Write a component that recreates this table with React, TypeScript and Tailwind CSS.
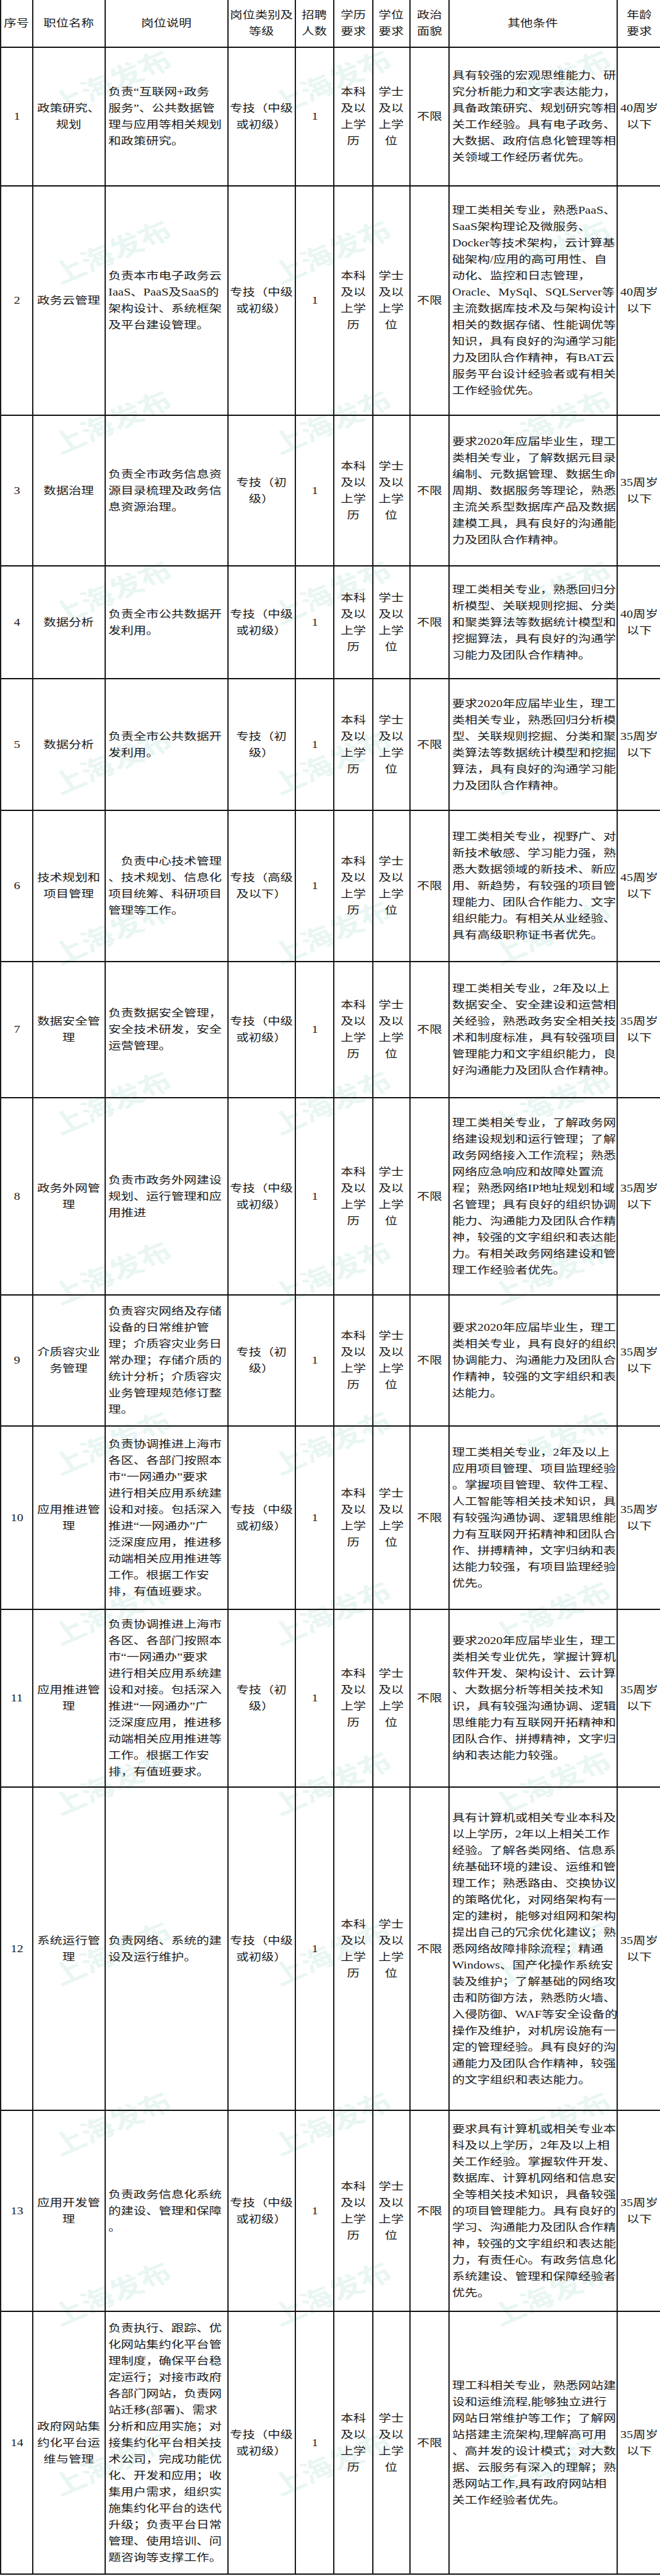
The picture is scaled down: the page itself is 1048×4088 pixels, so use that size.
import clsx from 'clsx';

type Row = {
  no: string;
  height: string;
  title: string[];
  desc: string[];
  level: string[];
  other: string[];
  age: string;
};

const GRID = 'grid grid-cols-[51px_115px_195px_107px_61px_62px_59px_62px_267px_69px]';

const EDU = ['本科', '及以', '上学', '历'];
const DEGREE = ['学士', '及以', '上学', '位'];
const MID = ['专技（中级', '或初级）'];
const JUNIOR = ['专技（初', '级）'];

const PUSH_DESC = [
  '负责协调推进上海市',
  '各区、各部门按照本',
  '市“一网通办”要求',
  '进行相关应用系统建',
  '设和对接。包括深入',
  '推进“一网通办”广',
  '泛深度应用，推进移',
  '动端相关应用推进等',
  '工作。根据工作安',
  '排，有值班要求。',
];

const rows: Row[] = [
  {
    no: '1',
    height: 'h-[220px]',
    title: ['政策研究、', '规划'],
    desc: ['负责“互联网+政务', '服务”、公共数据管', '理与应用等相关规划', '和政策研究。'],
    level: MID,
    other: [
      '具有较强的宏观思维能力、研',
      '究分析能力和文字表达能力，',
      '具备政策研究、规划研究等相',
      '关工作经验。具有电子政务、',
      '大数据、政府信息化管理等相',
      '关领域工作经历者优先。',
    ],
    age: '40',
  },
  {
    no: '2',
    height: 'h-[364px]',
    title: ['政务云管理'],
    desc: ['负责本市电子政务云', 'IaaS、PaaS及SaaS的', '架构设计、系统框架', '及平台建设管理。'],
    level: MID,
    other: [
      '理工类相关专业，熟悉PaaS、',
      'SaaS架构理论及微服务、',
      'Docker等技术架构，云计算基',
      '础架构/应用的高可用性、自',
      '动化、监控和日志管理，',
      'Oracle、MySql、SQLServer等',
      '主流数据库技术及与架构设计',
      '相关的数据存储、性能调优等',
      '知识，具有良好的沟通学习能',
      '力及团队合作精神，有BAT云',
      '服务平台设计经验者或有相关',
      '工作经验优先。',
    ],
    age: '40',
  },
  {
    no: '3',
    height: 'h-[239px]',
    title: ['数据治理'],
    desc: ['负责全市政务信息资', '源目录梳理及政务信', '息资源治理。'],
    level: JUNIOR,
    other: [
      '要求2020年应届毕业生，理工',
      '类相关专业，了解数据元目录',
      '编制、元数据管理、数据生命',
      '周期、数据服务等理论，熟悉',
      '主流关系型数据库产品及数据',
      '建模工具，具有良好的沟通能',
      '力及团队合作精神。',
    ],
    age: '35',
  },
  {
    no: '4',
    height: 'h-[179px]',
    title: ['数据分析'],
    desc: ['负责全市公共数据开', '发利用。'],
    level: MID,
    other: [
      '理工类相关专业，熟悉回归分',
      '析模型、关联规则挖掘、分类',
      '和聚类算法等数据统计模型和',
      '挖掘算法，具有良好的沟通学',
      '习能力及团队合作精神。',
    ],
    age: '40',
  },
  {
    no: '5',
    height: 'h-[209px]',
    title: ['数据分析'],
    desc: ['负责全市公共数据开', '发利用。'],
    level: JUNIOR,
    other: [
      '要求2020年应届毕业生，理工',
      '类相关专业，熟悉回归分析模',
      '型、关联规则挖掘、分类和聚',
      '类算法等数据统计模型和挖掘',
      '算法，具有良好的沟通学习能',
      '力及团队合作精神。',
    ],
    age: '35',
  },
  {
    no: '6',
    height: 'h-[240px]',
    title: ['技术规划和', '项目管理'],
    desc: ['　负责中心技术管理', '、技术规划、信息化', '项目统筹、科研项目', '管理等工作。'],
    level: ['专技（高级', '及以下）'],
    other: [
      '理工类相关专业，视野广、对',
      '新技术敏感、学习能力强，熟',
      '悉大数据领域的新技术、新应',
      '用、新趋势，有较强的项目管',
      '理能力、团队合作能力、文字',
      '组织能力。有相关从业经验、',
      '具有高级职称证书者优先。',
    ],
    age: '45',
  },
  {
    no: '7',
    height: 'h-[216px]',
    title: ['数据安全管', '理'],
    desc: ['负责数据安全管理，', '安全技术研发，安全', '运营管理。'],
    level: MID,
    other: [
      '理工类相关专业，2年及以上',
      '数据安全、安全建设和运营相',
      '关经验，熟悉政务安全相关技',
      '术和制度标准，具有较强项目',
      '管理能力和文字组织能力，良',
      '好沟通能力及团队合作精神。',
    ],
    age: '35',
  },
  {
    no: '8',
    height: 'h-[313px]',
    title: ['政务外网管', '理'],
    desc: ['负责市政务外网建设', '规划、运行管理和应', '用推进'],
    level: MID,
    other: [
      '理工类相关专业，了解政务网',
      '络建设规划和运行管理；了解',
      '政务网络接入工作流程；熟悉',
      '网络应急响应和故障处置流',
      '程；熟悉网络IP地址规划和域',
      '名管理；具有良好的组织协调',
      '能力、沟通能力及团队合作精',
      '神，较强的文字组织和表达能',
      '力。有相关政务网络建设和管',
      '理工作经验者优先。',
    ],
    age: '35',
  },
  {
    no: '9',
    height: 'h-[208px]',
    title: ['介质容灾业', '务管理'],
    desc: [
      '负责容灾网络及存储',
      '设备的日常维护管',
      '理；介质容灾业务日',
      '常办理；存储介质的',
      '统计分析；介质容灾',
      '业务管理规范修订整',
      '理。',
    ],
    level: JUNIOR,
    other: [
      '要求2020年应届毕业生，理工',
      '类相关专业，具有良好的组织',
      '协调能力、沟通能力及团队合',
      '作精神，较强的文字组织和表',
      '达能力。',
    ],
    age: '35',
  },
  {
    no: '10',
    height: 'h-[291px]',
    title: ['应用推进管', '理'],
    desc: PUSH_DESC,
    level: MID,
    other: [
      '理工类相关专业，2年及以上',
      '应用项目管理、项目监理经验',
      '。掌握项目管理、软件工程、',
      '人工智能等相关技术知识，具',
      '有较强沟通协调、逻辑思维能',
      '力有互联网开拓精神和团队合',
      '作、拼搏精神，文字归纳和表',
      '达能力较强，有项目监理经验',
      '优先。',
    ],
    age: '35',
  },
  {
    no: '11',
    height: 'h-[282px]',
    title: ['应用推进管', '理'],
    desc: PUSH_DESC,
    level: JUNIOR,
    other: [
      '要求2020年应届毕业生，理工',
      '类相关专业优先，掌握计算机',
      '软件开发、架构设计、云计算',
      '、大数据分析等相关技术知',
      '识，具有较强沟通协调、逻辑',
      '思维能力有互联网开拓精神和',
      '团队合作、拼搏精神，文字归',
      '纳和表达能力较强。',
    ],
    age: '35',
  },
  {
    no: '12',
    height: 'h-[513px]',
    title: ['系统运行管', '理'],
    desc: ['负责网络、系统的建', '设及运行维护。'],
    level: MID,
    other: [
      '具有计算机或相关专业本科及',
      '以上学历，2年以上相关工作',
      '经验。了解各类网络、信息系',
      '统基础环境的建设、运维和管',
      '理工作；熟悉路由、交换协议',
      '的策略优化，对网络架构有一',
      '定的建树，能够对组网和架构',
      '提出自己的冗余优化建议；熟',
      '悉网络故障排除流程；精通',
      'Windows、国产化操作系统安',
      '装及维护；了解基础的网络攻',
      '击和防御方法，熟悉防火墙、',
      '入侵防御、WAF等安全设备的',
      '操作及维护，对机房设施有一',
      '定的管理经验。具有良好的沟',
      '通能力及团队合作精神，较强',
      '的文字组织和表达能力。',
    ],
    age: '35',
  },
  {
    no: '13',
    height: 'h-[319px]',
    title: ['应用开发管', '理'],
    desc: ['负责政务信息化系统', '的建设、管理和保障', '。'],
    level: MID,
    other: [
      '要求具有计算机或相关专业本',
      '科及以上学历，2年及以上相',
      '关工作经验。掌握软件开发、',
      '数据库、计算机网络和信息安',
      '全等相关技术知识，具备较强',
      '的项目管理能力。具有良好的',
      '学习、沟通能力及团队合作精',
      '神，较强的文字组织和表达能',
      '力，有责任心。有政务信息化',
      '系统建设、管理和保障经验者',
      '优先。',
    ],
    age: '35',
  },
  {
    no: '14',
    height: 'h-[417px]',
    title: ['政府网站集', '约化平台运', '维与管理'],
    desc: [
      '负责执行、跟踪、优',
      '化网站集约化平台管',
      '理制度，确保平台稳',
      '定运行；对接市政府',
      '各部门网站，负责网',
      '站迁移(部署)、需求',
      '分析和应用实施；对',
      '接集约化平台相关技',
      '术公司，完成功能优',
      '化、开发和应用；收',
      '集用户需求，组织实',
      '施集约化平台的迭代',
      '升级；负责平台日常',
      '管理、使用培训、问',
      '题咨询等支撑工作。',
    ],
    level: MID,
    other: [
      '理工科相关专业，熟悉网站建',
      '设和运维流程,能够独立进行',
      '网站日常维护等工作；了解网',
      '站搭建主流架构,理解高可用',
      '、高并发的设计模式；对大数',
      '据、云服务有深入的理解；熟',
      '悉网站工作,具有政府网站相',
      '关工作经验者优先。',
    ],
    age: '35',
  },
];

function Cell({ lines, left, last }: { lines: string[]; left?: boolean; last?: boolean }) {
  return (
    <div
      className={clsx(
        'flex items-center overflow-visible',
        left ? 'justify-start pl-[4px]' : 'justify-center',
        !last && 'border-r-2 border-[#1c1c1c]'
      )}
    >
      <span
        className={clsx(
          'inline-block whitespace-nowrap scale-x-[1.25]',
          left ? 'origin-left text-left' : 'origin-center text-center'
        )}
      >
        {lines.map((line, i) => (
          <span key={i} className="block">
            {line}
          </span>
        ))}
      </span>
    </div>
  );
}

function Watermarks() {
  return (
    <div className="pointer-events-none absolute inset-x-0 -top-[7px] flex flex-col">
      {Array.from({ length: 15 }).map((_, r) => (
        <div key={r} className="flex h-[270px] items-center pl-[2px]">
          {[0, 1, 2].map((c) => (
            <div key={c} className="flex w-[361px] justify-center">
              <span className="whitespace-nowrap font-['Noto_Sans_CJK_SC',sans-serif] text-[40px] font-bold leading-none text-[rgba(120,200,180,0.16)] [transform:scaleX(1.3)_rotate(-29deg)]">
                上海发布
              </span>
            </div>
          ))}
        </div>
      ))}
    </div>
  );
}

export default function App() {
  return (
    <div className="relative w-[1048px] bg-white font-['Liberation_Serif','Noto_Sans_CJK_SC',serif] text-[16px] leading-[26px] text-[#1a1a1a]">
      <Watermarks />
      <div className="relative border-l-2 border-[#1c1c1c]">
        <div className={clsx(GRID, 'h-[76px] border-b-2 border-[#111]')}>
          <Cell lines={['序号']} />
          <Cell lines={['职位名称']} />
          <Cell lines={['岗位说明']} />
          <Cell lines={['岗位类别及', '等级']} />
          <Cell lines={['招聘', '人数']} />
          <Cell lines={['学历', '要求']} />
          <Cell lines={['学位', '要求']} />
          <Cell lines={['政治', '面貌']} />
          <Cell lines={['其他条件']} />
          <Cell lines={['年龄', '要求']} last />
        </div>
        {rows.map((row) => (
          <div key={row.no} className={clsx(GRID, row.height, 'border-b-2 border-[#111]')}>
            <Cell lines={[row.no]} />
            <Cell lines={row.title} />
            <Cell lines={row.desc} left />
            <Cell lines={row.level} />
            <Cell lines={['1']} />
            <Cell lines={EDU} />
            <Cell lines={DEGREE} />
            <Cell lines={['不限']} />
            <Cell lines={row.other} left />
            <Cell lines={[`${row.age}周岁`, '以下']} last />
          </div>
        ))}
      </div>
    </div>
  );
}
